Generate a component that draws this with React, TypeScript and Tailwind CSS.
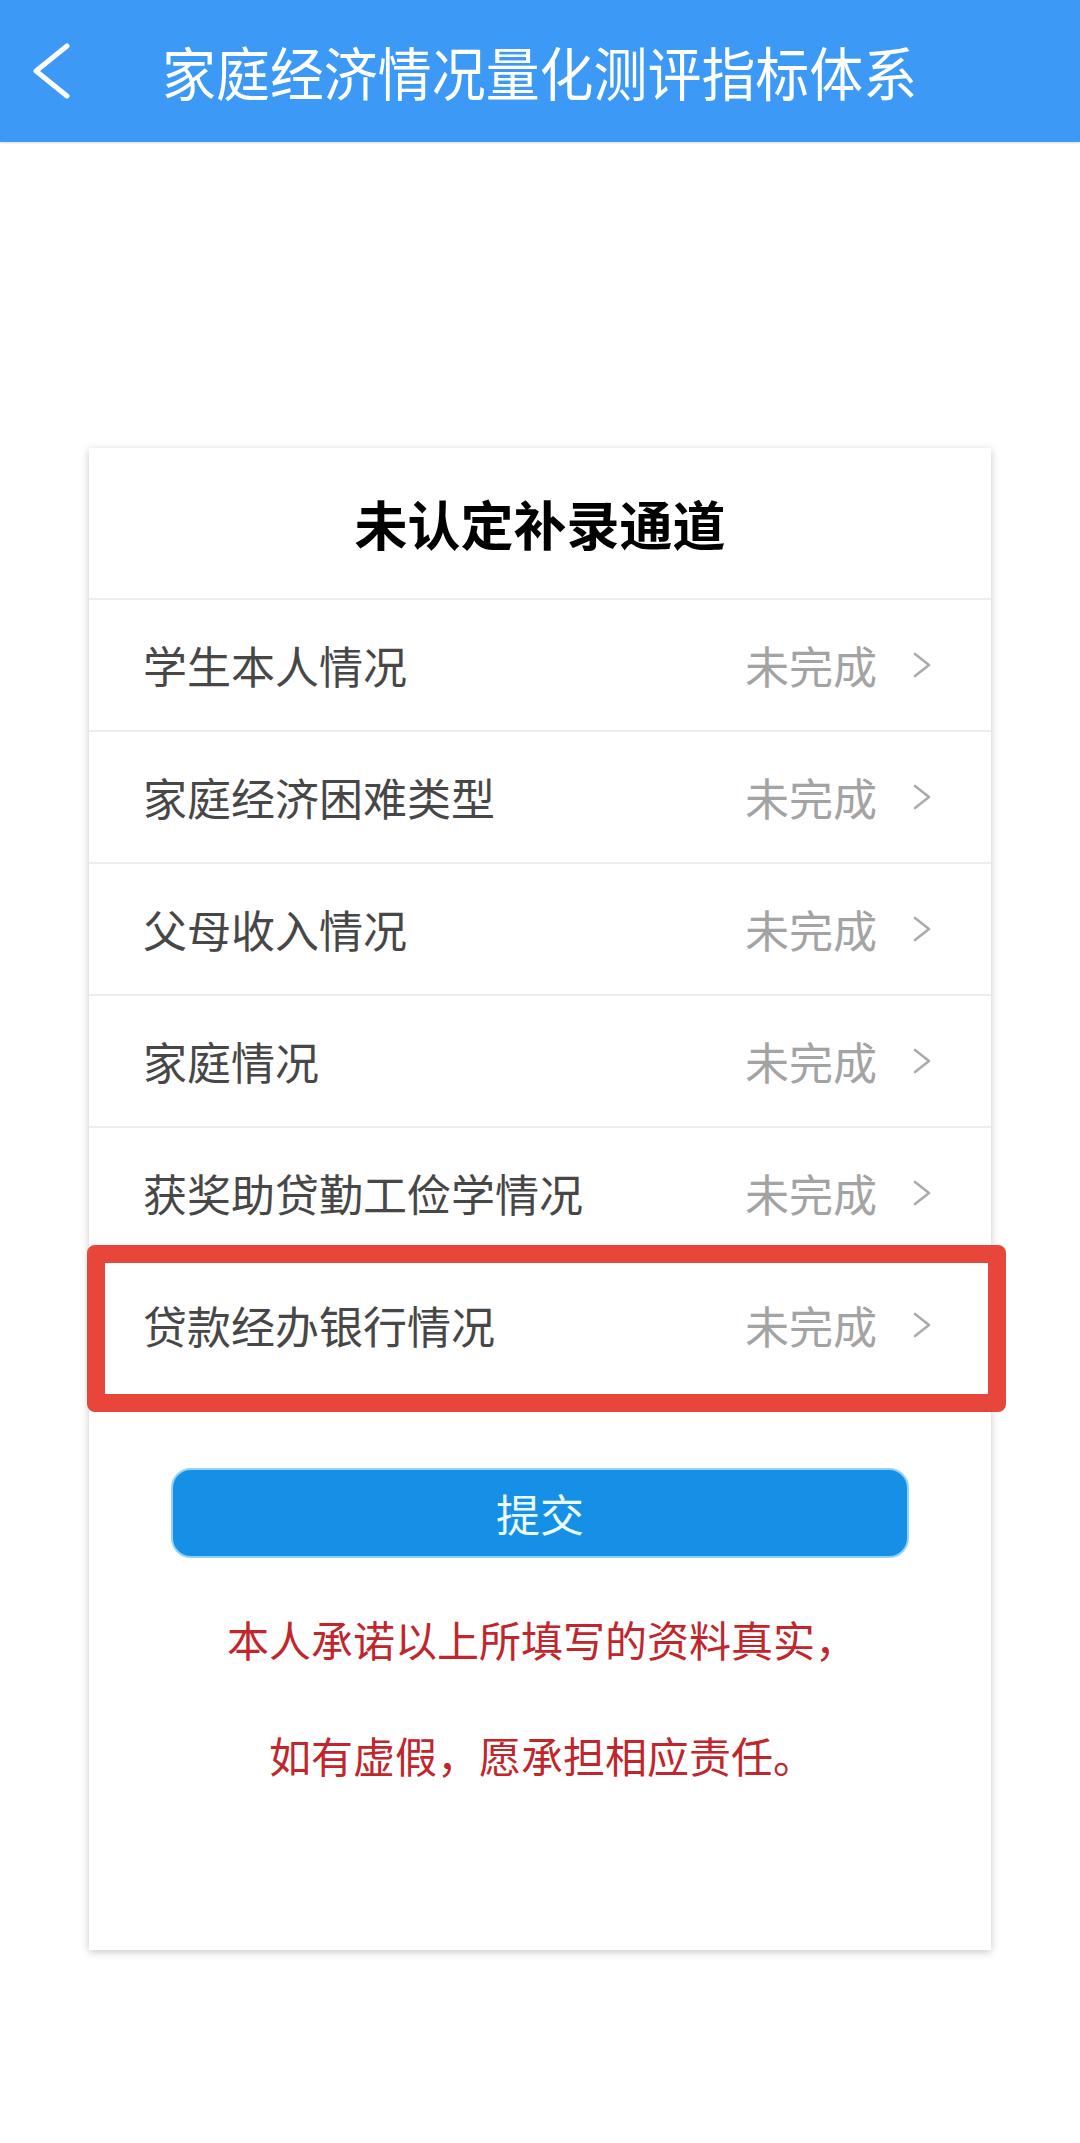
import React from 'react';

const rows = [
  '学生本人情况',
  '家庭经济困难类型',
  '父母收入情况',
  '家庭情况',
  '获奖助贷勤工俭学情况',
  '贷款经办银行情况',
];

const font = { fontFamily: '"Noto Sans CJK SC", "Noto Sans", sans-serif' };

function Chevron({ className }: { className?: string }) {
  return (
    <svg viewBox="0 0 18 26" className={className} fill="none">
      <path d="M2 2 L16 13 L2 24" stroke="currentColor" strokeWidth="2.6" strokeLinecap="round" strokeLinejoin="round" />
    </svg>
  );
}

function Row({ label, marked }: { label: string; marked?: boolean }) {
  return (
    <div className="relative flex h-[132px] items-center border-t-2 border-[#ededed] pl-[54px] pr-[60px]">
      <span className="flex-1 text-[44px] leading-none text-[#474747]">{label}</span>
      <span className="text-[44px] leading-none text-[#a3a3a3]">未完成</span>
      <Chevron className="ml-[36px] h-[26px] w-[18px] text-[#ababab]" />
      {marked && (
        <div className="pointer-events-none absolute -top-[15px] -bottom-[22px] -left-[2px] -right-[15px] rounded-[8px] border-[18px] border-[#e8463a]" />
      )}
    </div>
  );
}

export default function App() {
  return (
    <div className="min-h-[2143px] w-[1080px] bg-white" style={font}>
      <header className="relative flex h-[142px] items-center bg-[#3d99f6] shadow-[0_1px_2px_rgba(0,0,0,0.15)]">
        <svg viewBox="0 0 40 56" className="ml-[31px] h-[56px] w-[40px]" fill="none">
          <path d="M36 3 L5 28 L36 53" stroke="white" strokeWidth="5" strokeLinecap="round" strokeLinejoin="round" />
        </svg>
        <h1 className="ml-[91px] origin-left scale-x-[0.93] whitespace-nowrap text-[58px] leading-none text-white">
          家庭经济情况量化测评指标体系
        </h1>
      </header>

      <div className="mx-[89px] mt-[306px] h-[1502px] bg-white shadow-[0_2px_8px_rgba(0,0,0,0.22)]">
        <div className="flex h-[150px] items-center justify-center">
          <h2 className="text-[53px] font-bold leading-none text-black">未认定补录通道</h2>
        </div>
        {rows.map((r, i) => (
          <Row key={r} label={r} marked={i === rows.length - 1} />
        ))}
        <div className="flex justify-center pt-[78px]">
          <button className="flex h-[90px] w-[738px] items-center justify-center rounded-[20px] border-2 border-[#8fd3f8] bg-[#1590e6] text-[44px] leading-none text-[#eafcff]">
            提交
          </button>
        </div>
        <div className="flex flex-col items-center pt-[60px] text-[42px] leading-none text-[#c0262b]">
          <p className="pl-[4px]">本人承诺以上所填写的资料真实，</p>
          <p className="mt-[74px] pl-[4px]">如有虚假，愿承担相应责任。</p>
        </div>
      </div>
    </div>
  );
}
